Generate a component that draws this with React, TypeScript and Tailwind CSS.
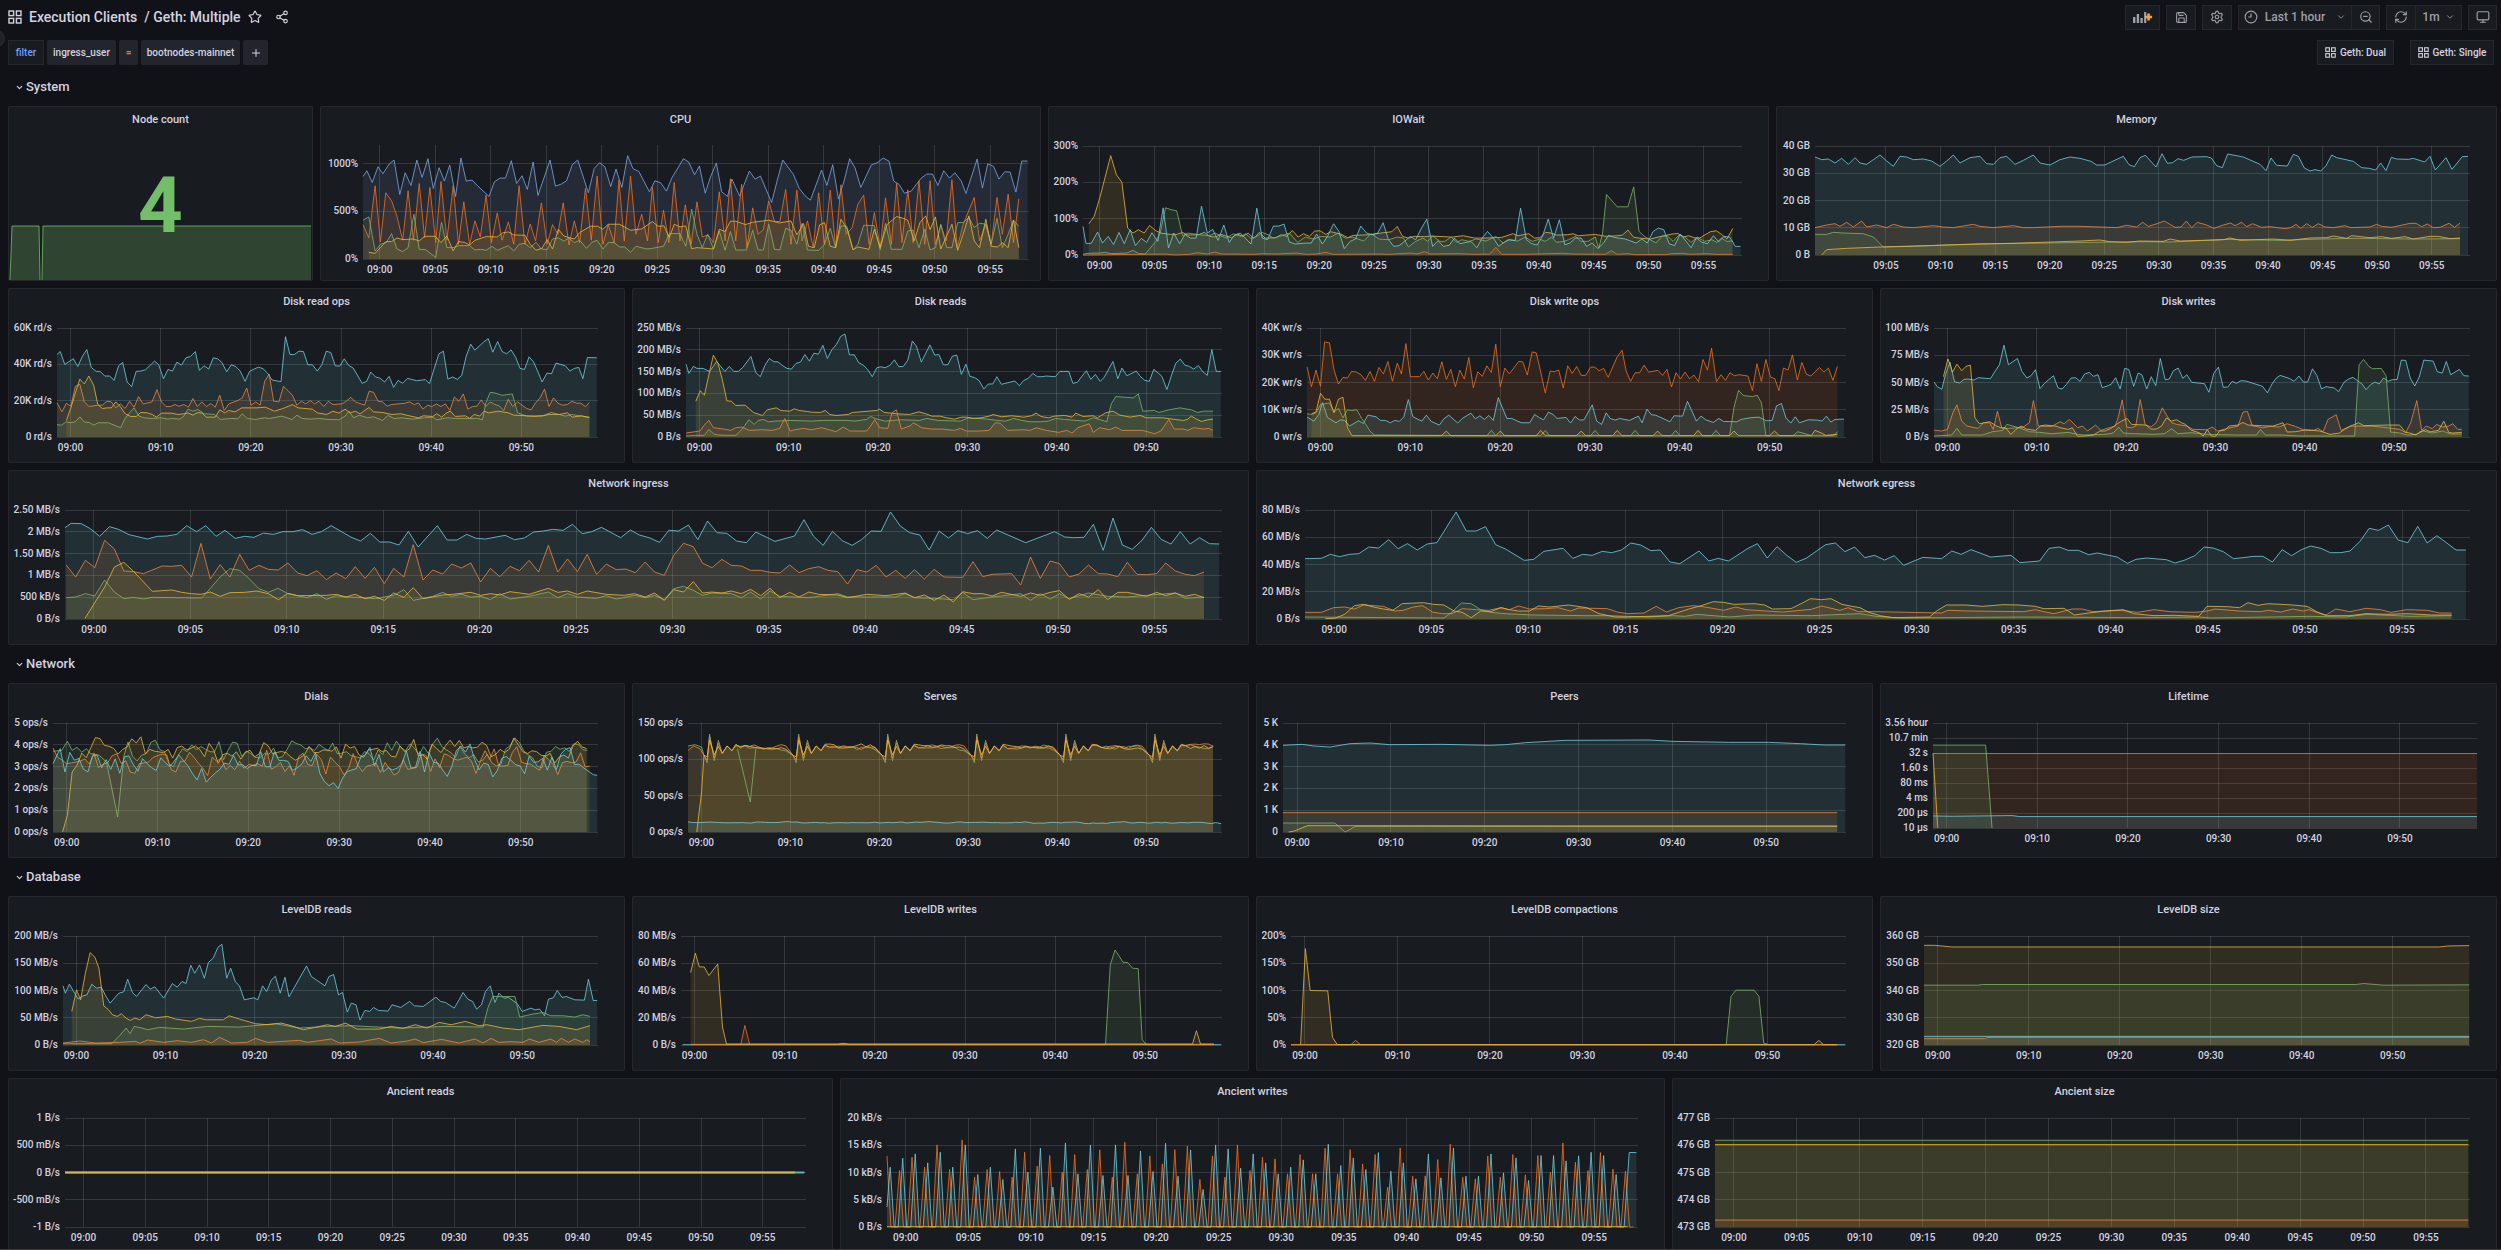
import { ChevronDown, Monitor, Plus, RefreshCw, Save, Settings, Share2, Star, ZoomOut } from 'lucide-react';
import clsx from 'clsx';

const BLUE = '#7ea6ea';
const TEAL = '#6ed0e0';
const ORANGE = '#ef843c';
const DEEP_ORANGE = '#f2701e';
const YELLOW = '#eab839';
const GREEN = '#7eb26d';

type Series = { color: string; points: string; width?: number; lineOnly?: boolean };

type ChartProps = {
  title: string;
  // column span in the 24 column grid
  span: string;
  // space left for the y axis labels and right of the plot
  pad: string;
  // left, top, right and bottom of the plot in the units of the points
  view: [number, number, number, number];
  yLabels: string[];
  series: Series[];
  step?: 5 | 10;
  firstTick?: number;
  // share of the plot above the first label
  headroom?: number;
  filled?: boolean;
  height?: string;
};

// moves every point to the right, for the second half of the long charts
const shift = (dx: number, points: string) =>
  points
    .split(' ')
    .map((p) => {
      const [x, y] = p.split(',').map(Number);
      return `${x + dx},${y}`;
    })
    .join(' ');

// uneven noise around a level
const noise = (from: number, to: number, mid: number, amp: number, seed: number) => {
  let state = seed;
  let last = 0;
  const out: string[] = [];
  for (let x = from; x <= to; x += 5.7) {
    state = (state * 16807) % 2147483647;
    const next = (state / 2147483647 - 0.5) * 2;
    last = last * 0.45 + next * Math.abs(next) * 0.9 + next * 0.3;
    out.push(`${x.toFixed(1)},${(mid + last * amp).toFixed(1)}`);
  }
  return out.join(' ');
};

// one narrow spike per minute
const spikes = (from: number, base: number, peaks: number[]) =>
  peaks
    .map((peak, i) => {
      const x = from + i * 15.7;
      return `${x.toFixed(1)},${peak} ${(x + 5).toFixed(1)},${base} ${(x + 10).toFixed(1)},${base}`;
    })
    .join(' ');

const servesSpikes = (color: string, offset: number, seed: number, lead: string) => {
  const parts = [lead];
  for (let i = 0; i < 6; i++) {
    const x = 889 + i * 111.6;
    parts.push(
      `${x - 6},350 ${x - 2},${372 - offset} ${x + 1},${286 + offset} ${x + 7},${366 - offset} ${x + 12},${305 + offset} ${x + 17},344 ${x + 23},322 ${x + 29},336`,
    );
    parts.push(noise(x + 34, Math.min(x + 100, 1522), 328 - offset / 4, 6, seed + i * 77));
  }
  return { color, points: parts.join(' ') };
};

const charts: Record<string, ChartProps> = {
  cpu: {
    title: 'CPU',
    span: 'col-span-7',
    pad: 'pl-[43px] pr-[12px]',
    view: [131, 133, 1505, 474],
    yLabels: ['1000%', '500%', '0%'],
    headroom: 0.165,
    height: 'h-[114px]',
    series: [
      { color: BLUE, points: '131,227 139,210 150,245 162,198 172,219 185,190 195,178 207,281 218,216 230,254 242,178 253,230 265,174 276,263 288,201 299,241 310,193 322,287 333,172 344,241 356,238 368,256 391,287 402,243 414,232 425,232 437,180 448,248 459,225 470,266 482,184 492,284 517,178 528,256 540,250 551,240 563,191 574,178 596,276 608,203 619,186 630,198 642,257 653,205 665,260 677,165 688,204 700,212 722,273 733,240 745,246 757,271 768,232 792,174 803,184 815,222 825,196 837,277 848,228 860,187 871,273 883,287 892,235 908,286 928,211 940,235 951,226 962,264 974,305 985,242 997,178 1019,221 1031,263 1043,285 1054,298 1077,208 1088,254 1100,192 1112,295 1124,238 1135,174 1146,201 1158,260 1180,192 1192,186 1204,172 1216,181 1226,241 1237,251 1248,277 1262,271 1282,233 1294,220 1306,220 1317,254 1329,210 1341,232 1352,216 1365,240 1375,278 1398,175 1409,262 1420,189 1432,197 1443,235 1455,213 1466,214 1478,274 1490,181 1502,181' },
      { color: DEEP_ORANGE, points: '131,371 143,411 156,255 167,423 178,276 190,300 201,346 213,418 224,270 235,418 247,248 258,410 269,260 281,425 292,242 304,418 317,255 328,430 339,303 351,430 362,360 373,408 385,283 396,425 408,336 418,418 431,363 442,430 453,255 465,430 476,369 487,420 499,306 511,430 522,371 533,400 544,306 556,432 567,360 578,425 590,262 602,418 614,226 626,430 637,371 649,425 659,238 670,420 683,226 694,400 706,340 718,420 728,260 740,425 751,328 762,425 773,245 785,420 796,312 808,430 820,303 831,408 843,402 854,425 866,273 878,420 889,234 900,420 912,250 923,440 935,321 946,400 957,386 968,300 980,362 991,362 1003,266 1014,430 1026,268 1037,420 1048,360 1060,440 1071,276 1083,430 1095,268 1106,440 1117,252 1128,400 1140,380 1152,310 1164,283 1175,430 1186,335 1198,440 1209,291 1221,430 1232,248 1243,425 1255,267 1266,425 1278,240 1290,430 1301,240 1312,430 1323,372 1334,420 1346,237 1357,440 1369,371 1392,290 1403,420 1416,371 1427,430 1439,290 1450,400 1462,280 1473,425 1484,294' },
      { color: GREEN, points: '131,358 143,348 156,450 167,430 179,425 190,398 201,444 213,452 224,440 236,340 247,445 260,446 281,469 293,364 304,440 317,440 328,434 351,434 362,447 374,445 385,448 397,436 408,448 431,434 442,450 453,430 465,427 476,440 488,424 499,444 511,446 522,414 534,411 545,420 556,412 567,425 578,418 592,442 603,424 614,418 626,444 637,425 649,425 660,438 671,438 683,454 694,436 717,444 728,442 751,436 763,398 785,398 797,436 809,325 820,400 831,440 842,400 854,444 866,390 878,448 889,392 900,447 922,447 935,388 946,447 957,447 968,370 980,445 991,447 1003,382 1014,388 1026,430 1037,367 1048,447 1071,448 1083,430 1095,382 1106,440 1117,375 1129,376 1142,447 1152,430 1164,373 1186,374 1198,447 1209,367 1221,445 1243,445 1255,390 1266,388 1278,440 1290,385 1301,447 1312,440 1323,370 1335,440 1346,440 1358,365 1369,365 1381,350 1392,380 1403,367 1416,370 1427,430 1439,352 1450,440 1462,400 1473,358 1484,376' },
      { color: YELLOW, points: '143,454 156,457 178,422 190,422 201,411 213,416 235,414 247,420 258,406 280,406 292,425 304,405 317,450 328,422 340,424 351,432 362,418 385,407 408,408 419,396 431,393 442,402 465,403 476,430 488,448 500,442 511,416 522,444 534,385 545,405 556,410 567,414 578,395 600,376 615,376 626,385 637,370 660,370 683,388 706,384 728,362 740,376 752,375 763,410 773,370 785,378 797,375 809,443 820,440 854,444 866,385 878,392 889,361 900,361 920,371 935,364 968,358 990,366 1014,360 1026,402 1040,368 1050,436 1062,440 1073,372 1083,365 1095,436 1106,440 1117,355 1130,385 1142,446 1152,438 1175,445 1186,385 1198,440 1212,371 1232,347 1245,352 1255,358 1268,420 1280,365 1292,345 1301,386 1312,348 1323,444 1346,370 1358,448 1369,400 1381,345 1392,420 1403,440 1416,355 1427,436 1440,438 1450,425 1462,440 1473,357 1484,440' },
    ],
  },
  ioWait: {
    title: 'IOWait',
    span: 'col-span-7',
    pad: 'pl-[35px] pr-[27px]',
    view: [90, 138, 1447, 466],
    yLabels: ['300%', '200%', '100%', '0%'],
    series: [
      { color: YELLOW, points: '102,372 113,350 125,292 147,167 159,225 170,247 182,385 193,400 204,390 216,400 227,377 239,392 250,400 270,404 283,404 295,398 306,406 328,405 340,398 351,410 362,412 374,404 396,414 408,403 419,410 430,400 442,416 453,398 465,415 487,414 498,405 510,410 521,392 533,412 544,402 556,410 567,394 578,393 590,404 600,396 612,400 623,404 635,414 646,407 680,405 703,400 726,396 737,380 748,410 760,415 771,410 794,411 805,409 850,412 873,408 896,415 918,415 952,413 963,408 975,402 986,408 1008,402 1020,415 1031,414 1042,398 1054,400 1065,406 1088,405 1099,402 1110,408 1145,404 1167,410 1190,408 1201,406 1212,391 1224,413 1236,415 1258,418 1280,410 1303,403 1315,401 1326,412 1337,408 1349,414 1360,415 1371,405 1382,396 1394,393 1405,404 1416,418 1428,386' },
      { color: GREEN, points: '90,464 100,461 124,460 136,458 148,462 180,460 193,452 205,462 218,463 240,425 249,400 260,324 272,330 283,333 295,408 306,400 330,405 350,408 362,400 385,415 400,402 415,410 425,402 436,416 448,410 459,398 471,405 482,415 495,410 515,400 532,428 548,412 565,418 580,410 600,412 615,400 630,415 645,412 668,424 683,402 700,418 720,420 737,412 750,415 760,442 775,425 790,415 800,425 810,408 825,425 835,425 848,412 860,428 870,420 885,425 900,418 920,424 940,410 955,430 965,420 985,424 1000,412 1015,425 1030,418 1042,425 1055,412 1065,428 1080,425 1090,420 1105,410 1115,425 1130,425 1145,412 1152,446 1160,400 1168,284 1190,321 1212,321 1224,261 1235,395 1246,410 1258,420 1270,430 1282,410 1293,408 1305,425 1318,405 1330,412 1342,428 1355,412 1370,425 1385,420 1395,428 1405,415 1415,425 1427,424' },
      { color: TEAL, points: '90,380 96,431 107,431 120,397 130,430 142,410 153,435 164,398 175,432 187,390 198,438 210,416 221,428 232,399 244,425 255,324 266,445 277,400 289,432 300,404 311,415 323,415 334,319 346,400 357,389 368,422 380,376 391,428 402,406 414,400 436,433 448,325 459,415 470,420 482,379 493,379 504,373 515,427 527,433 549,430 560,430 571,403 583,433 594,408 606,372 617,395 628,447 640,425 651,418 662,379 674,400 685,405 697,400 708,369 719,420 730,440 741,438 752,425 764,410 775,420 787,385 798,358 810,440 821,423 832,440 844,437 855,415 866,432 889,425 901,444 912,415 923,395 935,415 946,440 957,428 968,420 980,422 991,325 1003,420 1014,432 1025,436 1036,410 1048,358 1059,415 1071,360 1082,435 1093,430 1104,415 1116,415 1127,440 1138,430 1150,446 1162,430 1172,407 1184,413 1207,418 1229,430 1241,418 1252,430 1264,395 1275,385 1286,390 1297,432 1308,438 1320,403 1332,425 1342,444 1353,415 1365,428 1376,432 1388,408 1399,426 1410,410 1422,412 1433,440 1444,440' },
      { color: DEEP_ORANGE, points: '90,466 260,463 280,466 310,464 325,459 345,463 362,457 375,463 400,463 440,464 460,462 490,463 530,460 550,464 570,463 590,458 605,464 700,463 720,464 765,460 778,463 793,456 805,463 860,462 900,464 928,463 940,443 952,464 1000,464 1075,461 1100,463 1165,464 1178,453 1190,464 1212,462 1225,465 1290,465 1303,462 1325,461 1340,464 1375,462 1395,464 1428,464' },
    ],
  },
  memory: {
    title: 'Memory',
    span: 'col-span-7',
    pad: 'pl-[39px] pr-[27px]',
    view: [-795, 439, 1170, 766],
    yLabels: ['40 GB', '30 GB', '20 GB', '10 GB', '0 B'],
    firstTick: 5,
    series: [
      { color: TEAL, points: '-795,472 -775,480 -755,478 -735,490 -715,476 -695,494 -675,474 -660,490 -640,494 -620,480 -600,466 -580,484 -560,500 -540,470 -520,472 -500,480 -470,478 -445,484 -420,500 -400,484 -380,466 -360,490 -330,474 -300,470 -280,492 -260,494 -240,474 -220,470 -195,494 -170,482 -140,466 -120,490 -90,496 -60,480 -30,472 0,476 33,485 50,496 74,496 130,470 147,495 163,501 180,474 196,467 228,502 246,462 262,491 278,489 294,477 311,482 336,472 380,471 394,475 410,498 427,504 443,463 490,472 540,494 558,513 573,475 590,497 622,499 640,464 655,470 673,505 690,514 705,510 722,514 738,498 755,466 770,474 820,485 845,504 868,506 887,511 902,490 918,513 934,473 950,478 985,479 1000,476 1034,487 1050,470 1066,511 1098,474 1116,509 1147,471 1164,470' },
      { color: ORANGE, points: '-795,684 -760,676 -735,672 -720,680 -700,668 -680,682 -655,664 -640,682 -610,676 -580,684 -560,674 -530,682 -500,684 -440,678 -410,682 -380,684 -320,674 -300,680 -260,684 -200,678 -170,684 -140,684 -60,680 0,680 60,682 110,684 140,677 170,682 188,668 205,680 225,674 253,664 285,683 303,682 319,664 335,684 352,668 380,676 402,686 430,676 452,670 465,678 485,668 500,681 518,672 545,683 570,681 615,687 632,684 648,674 662,686 680,672 697,683 715,672 735,682 760,684 795,678 812,684 870,682 890,674 905,680 935,683 990,671 1008,671 1025,681 1042,673 1060,684 1080,683 1107,671 1124,683 1140,670' },
      { color: GREEN, points: '-795,704 -760,704 -740,698 -710,700 -650,702 -620,712 -590,742 -500,740 -300,732 -100,730 100,727 200,726 270,727 450,719 600,722 720,718 830,716 1000,718 1140,717' },
      { color: YELLOW, points: '-775,766 -760,750 -700,746 -600,742 -400,736 -200,731 0,724 60,721 90,726 140,728 180,724 250,725 270,718 300,724 430,720 450,715 480,722 580,718 630,722 690,715 740,714 760,709 800,716 815,708 870,714 905,711 935,716 975,711 1000,718 1050,710 1075,710 1110,717 1140,715' },
    ],
  },
  diskReadOps: {
    title: 'Disk read ops',
    span: 'col-span-6',
    pad: 'pl-[49px] pr-[27px]',
    view: [139, 129, 1465, 458],
    yLabels: ['60K rd/s', '40K rd/s', '20K rd/s', '0 rd/s'],
    step: 10,
    series: [
      { color: TEAL, points: '139,209 147,200 158,239 179,222 190,245 201,215 212,194 223,248 235,260 245,260 256,274 268,274 279,287 290,243 300,233 311,292 322,306 333,260 344,259 356,255 378,229 388,239 400,282 411,254 422,259 433,232 444,241 455,219 466,215 478,200 488,257 499,243 511,253 522,219 533,222 543,233 555,261 566,240 577,245 588,259 600,290 611,260 622,253 633,247 644,252 655,265 666,286 688,291 699,155 710,209 721,209 732,199 743,200 754,240 765,240 777,259 788,240 799,199 810,203 821,243 832,244 843,222 854,242 865,250 887,296 898,290 908,262 920,277 930,280 942,292 953,275 964,308 975,287 986,296 998,281 1020,288 1042,285 1052,297 1075,207 1086,199 1097,283 1109,277 1120,284 1131,272 1142,214 1153,178 1163,196 1185,171 1196,161 1207,202 1219,170 1230,200 1241,207 1252,195 1263,217 1274,251 1285,254 1296,216 1307,231 1318,262 1328,292 1340,265 1351,267 1362,235 1385,243 1396,259 1407,251 1418,248 1428,282 1439,218 1462,219' },
      { color: ORANGE, points: '139,355 151,382 162,356 173,365 184,305 195,299 206,352 217,366 239,362 250,362 261,350 272,352 283,370 294,358 306,372 317,350 328,368 339,336 350,358 372,352 384,315 395,352 406,366 417,366 428,360 438,365 450,360 461,368 472,342 483,366 494,352 505,366 516,357 527,368 538,332 549,378 560,358 582,348 593,340 604,310 615,362 626,352 637,362 648,290 659,268 670,350 683,352 694,305 705,318 716,332 727,362 738,350 749,358 760,348 770,358 781,350 793,366 804,350 815,360 837,358 848,350 859,338 870,352 893,362 904,320 915,323 926,350 937,352 948,365 959,360 992,356 1003,352 1015,360 1025,355 1036,374 1047,362 1058,366 1069,358 1080,366 1091,358 1102,378 1113,337 1124,350 1135,328 1146,374 1157,366 1168,365 1179,346 1190,366 1201,352 1212,360 1223,364 1234,378 1245,344 1256,366 1268,352 1279,362 1290,372 1301,376 1312,355 1323,340 1334,313 1345,366 1356,340 1367,356 1378,362 1390,360 1401,350 1412,356 1423,356 1434,366 1444,354' },
      { color: GREEN, points: '139,421 150,422 162,412 173,415 184,412 195,397 206,413 218,414 229,422 240,415 265,415 283,424 295,430 306,402 317,385 328,370 340,395 352,400 372,402 395,400 410,404 420,402 440,404 450,395 460,374 472,380 485,375 500,388 525,390 540,405 565,402 582,403 593,388 605,402 625,405 648,400 660,402 690,395 715,405 727,392 740,402 760,404 780,402 805,405 830,406 845,395 855,380 866,400 880,392 900,400 915,397 937,408 950,393 965,402 985,400 1010,404 1040,400 1060,398 1070,406 1095,400 1115,402 1145,402 1170,402 1182,406 1190,355 1201,323 1215,326 1230,332 1255,328 1268,385 1290,395 1310,394 1330,394 1350,384 1370,390 1385,395 1400,390 1425,395 1444,398' },
      { color: YELLOW, points: '162,408 173,370 184,325 195,283 206,298 217,274 229,302 239,360 250,372 262,370 272,370 283,352 295,368 306,388 320,396 333,396 344,384 360,385 372,390 383,398 395,386 420,386 435,390 450,388 460,385 472,392 484,384 495,386 505,398 527,398 538,376 550,385 560,378 575,382 592,370 615,370 628,370 650,368 672,380 693,372 716,360 730,370 765,374 777,385 800,390 815,380 830,386 845,374 858,385 870,380 882,388 893,378 904,369 915,382 937,384 960,390 982,388 1002,394 1025,400 1037,394 1060,396 1070,388 1082,398 1093,386 1103,380 1115,396 1140,394 1150,402 1162,390 1175,395 1186,380 1197,385 1220,380 1245,385 1258,392 1290,394 1310,396 1330,394 1345,390 1370,390 1390,385 1402,398 1425,394 1444,400' },
    ],
  },
  diskReads: {
    title: 'Disk reads',
    span: 'col-span-6',
    pad: 'pl-[54px] pr-[27px]',
    view: [163, 129, 1475, 458],
    yLabels: ['250 MB/s', '200 MB/s', '150 MB/s', '100 MB/s', '50 MB/s', '0 B/s'],
    step: 10,
    series: [
      { color: TEAL, points: '163,238 170,266 181,245 190,251 205,251 220,260 230,245 238,230 258,260 269,245 280,260 291,260 302,248 322,215 334,264 345,276 356,242 367,221 378,231 388,231 400,243 410,251 421,253 432,236 443,232 454,209 465,229 476,205 487,208 498,181 509,221 520,195 531,179 542,154 552,147 563,210 575,210 586,234 597,241 608,255 619,276 630,249 640,246 650,249 662,242 673,225 684,246 695,245 706,226 717,168 727,184 739,232 750,205 760,180 772,211 782,209 793,240 804,240 815,214 826,211 837,269 848,238 858,275 870,279 880,287 892,313 903,298 914,298 924,276 935,299 968,289 979,303 990,287 1001,281 1012,266 1023,276 1034,276 1045,274 1067,276 1078,260 1100,260 1110,296 1121,293 1132,275 1143,258 1154,284 1165,269 1177,290 1187,277 1208,230 1220,282 1230,250 1242,273 1265,259 1275,275 1286,287 1297,290 1308,254 1319,265 1328,275 1340,315 1352,270 1362,235 1373,223 1384,241 1395,245 1406,253 1417,242 1428,261 1439,272 1450,194 1461,260 1472,260' },
      { color: GREEN, points: '163,455 175,454 187,453 208,453 219,435 230,448 241,452 263,453 285,453 300,435 317,406 330,420 340,408 352,405 365,412 380,410 420,408 470,410 500,408 560,408 575,410 605,405 615,396 628,403 650,410 690,406 735,408 752,402 780,408 835,410 855,400 900,404 925,408 945,410 965,402 985,408 1005,412 1030,412 1050,410 1068,402 1090,405 1140,410 1160,400 1175,405 1193,412 1204,358 1215,336 1258,340 1270,328 1281,380 1310,378 1320,384 1345,376 1372,370 1400,376 1415,384 1430,380 1453,380' },
      { color: YELLOW, points: '187,350 198,318 208,332 220,265 230,211 241,235 252,285 263,349 274,350 285,363 308,362 318,373 328,384 350,393 362,376 384,370 395,378 417,380 428,373 440,378 460,381 470,383 492,384 504,378 515,390 530,393 560,390 570,384 590,382 630,378 637,374 648,384 680,388 710,390 733,382 750,388 765,395 785,395 800,400 820,404 838,398 850,398 865,402 885,400 905,395 915,390 935,397 960,394 990,398 1008,394 1020,386 1032,396 1050,400 1065,395 1090,393 1108,398 1117,386 1135,396 1160,394 1170,400 1190,385 1208,380 1225,392 1250,398 1275,393 1290,400 1330,400 1360,405 1380,408 1390,405 1400,395 1412,404 1425,411 1440,406 1453,404' },
      { color: ORANGE, points: '163,446 185,442 197,440 208,422 219,408 230,430 255,434 272,438 285,430 300,428 318,438 350,436 375,438 392,432 405,402 418,440 430,436 450,432 470,436 495,430 510,435 530,442 548,428 565,440 605,440 615,425 625,405 637,430 657,432 667,385 678,376 690,434 712,424 720,415 740,430 765,434 790,434 820,438 835,432 850,440 880,440 905,438 920,415 932,416 950,438 990,436 1005,438 1020,430 1045,438 1075,444 1095,438 1108,446 1122,430 1150,418 1160,444 1175,430 1200,436 1215,428 1230,438 1280,438 1310,448 1325,440 1345,405 1358,434 1380,434 1392,438 1405,430 1430,434 1443,432 1453,438' },
    ],
  },
  diskWriteOps: {
    title: 'Disk write ops',
    span: 'col-span-6',
    pad: 'pl-[51px] pr-[27px]',
    view: [166, 129, 1485, 458],
    yLabels: ['40K wr/s', '30K wr/s', '20K wr/s', '10K wr/s', '0 wr/s'],
    step: 10,
    series: [
      { color: DEEP_ORANGE, points: '166,246 177,306 188,256 199,305 209,171 221,174 232,255 243,298 254,278 265,280 275,260 287,262 298,270 309,287 320,260 331,290 342,248 353,268 364,230 375,290 387,235 397,268 408,176 419,276 441,276 452,260 463,286 474,265 485,282 496,231 507,284 518,254 529,306 540,256 551,283 562,218 573,309 584,261 595,275 606,243 617,263 628,178 639,306 650,250 661,267 672,250 684,230 694,231 705,271 717,201 727,204 738,262 749,325 761,259 771,261 782,256 793,310 804,243 815,266 826,245 837,272 848,272 860,247 870,247 881,258 892,251 903,278 925,216 937,196 947,259 958,290 969,264 980,264 991,241 1002,262 1025,257 1036,272 1047,254 1058,307 1069,264 1080,283 1091,262 1102,282 1113,271 1124,291 1135,224 1146,256 1156,190 1168,291 1179,270 1190,287 1201,264 1212,273 1223,270 1245,274 1256,318 1267,237 1278,290 1289,224 1300,277 1311,282 1321,318 1332,250 1343,256 1354,210 1366,286 1377,233 1388,268 1399,274 1420,248 1431,262 1442,250 1453,287 1464,245' },
      { color: TEAL, points: '166,398 183,410 195,390 204,354 216,399 237,415 248,406 258,408 270,425 292,409 304,417 315,392 335,397 346,408 358,408 370,415 381,408 392,411 403,397 414,345 425,397 447,410 458,392 470,411 490,422 501,403 513,392 535,416 546,402 567,386 578,403 589,394 600,405 611,393 622,408 634,339 655,402 667,402 690,415 711,415 723,390 735,400 745,406 757,383 768,390 778,402 800,399 811,416 822,396 833,407 844,406 864,361 875,410 887,420 898,385 908,402 920,407 931,402 955,408 977,395 986,415 998,374 1009,391 1019,392 1042,405 1054,412 1064,394 1085,395 1097,350 1119,410 1130,395 1142,406 1160,414 1174,402 1185,411 1218,412 1228,405 1250,400 1272,398 1290,409 1304,408 1315,364 1327,357 1338,400 1350,416 1361,397 1371,415 1393,406 1415,407 1426,410 1437,395 1448,413 1458,405 1480,404' },
      { color: GREEN, points: '166,388 177,390 188,385 199,360 221,355 232,382 243,372 254,400 265,376 275,378 288,376 300,402 310,420 320,440 331,452 606,454 617,438 628,454 738,454 749,438 760,454 860,454 871,438 882,454 958,454 969,438 980,454 1057,454 1068,438 1079,454 1156,454 1167,438 1178,454 1200,454 1211,368 1222,317 1234,333 1256,336 1268,332 1278,355 1289,454 1355,454 1367,442 1385,448 1400,454 1455,454 1464,442' },
      { color: YELLOW, points: '177,388 188,382 199,326 210,344 221,344 232,385 243,344 254,338 265,430 276,454 495,454 507,440 518,454 628,454 639,440 650,454 727,454 738,438 749,454 825,454 837,440 848,454 914,454 925,438 937,454 1013,454 1024,440 1035,454 1112,454 1123,438 1134,454 1200,454 1211,440 1222,454 1298,454 1310,440 1322,454 1400,454 1409,438 1425,446 1435,453 1464,450' },
    ],
  },
  diskWrites: {
    title: 'Disk writes',
    span: 'col-span-6',
    pad: 'pl-[54px] pr-[27px]',
    view: [182, 129, 1492, 458],
    yLabels: ['100 MB/s', '75 MB/s', '50 MB/s', '25 MB/s', '0 B/s'],
    step: 10,
    series: [
      { color: TEAL, points: '182,292 190,306 201,314 210,270 221,232 232,291 245,295 255,284 265,283 280,286 290,279 320,282 332,258 342,240 353,181 364,240 386,221 397,260 409,280 419,273 430,255 441,312 452,296 474,273 485,310 495,313 506,299 517,280 528,279 539,290 550,268 561,263 572,275 583,270 593,309 605,304 615,299 626,279 637,313 648,251 658,254 670,305 681,265 690,270 702,313 713,276 724,303 735,221 747,285 757,283 767,258 779,250 790,281 800,270 812,293 843,297 854,323 866,265 877,247 889,308 900,307 911,290 921,296 932,288 944,289 985,305 997,325 1008,298 1018,281 1028,272 1050,281 1062,290 1074,274 1085,292 1095,292 1107,252 1118,273 1129,313 1140,306 1160,310 1171,321 1184,293 1195,283 1206,278 1228,298 1238,315 1249,300 1260,292 1270,298 1281,280 1292,290 1302,285 1314,284 1324,226 1335,227 1346,280 1357,304 1368,277 1379,226 1402,229 1412,261 1424,265 1434,230 1445,270 1466,254 1477,273 1489,274' },
      { color: ORANGE, points: '182,437 200,440 215,435 228,385 238,361 250,410 262,425 290,432 303,415 318,415 327,435 337,380 348,432 365,432 385,430 400,428 415,415 425,348 437,425 470,426 490,412 500,418 513,405 533,430 545,425 557,440 577,422 590,438 610,430 625,425 632,400 642,346 653,428 665,430 675,425 686,345 698,420 712,428 725,415 740,370 752,395 763,415 775,420 800,425 815,435 850,436 862,428 875,440 900,432 925,425 937,383 948,381 960,424 985,430 1005,426 1025,428 1045,418 1065,426 1085,436 1110,438 1120,432 1133,442 1145,405 1165,391 1177,438 1200,425 1250,425 1290,430 1320,435 1335,445 1347,415 1362,348 1374,438 1385,425 1400,433 1410,420 1425,428 1440,425 1450,418 1462,435 1472,435' },
      { color: GREEN, points: '182,455 225,452 238,432 250,452 300,452 325,442 350,438 360,420 375,425 390,430 415,442 440,444 470,448 510,444 533,450 548,452 600,450 620,446 633,428 645,446 670,448 720,450 745,448 763,433 778,448 810,445 850,450 920,452 970,452 980,435 992,452 1030,452 1060,454 1075,455 1120,455 1210,455 1221,240 1232,224 1245,245 1254,252 1275,251 1287,273 1298,443 1320,446 1340,452 1360,450 1378,440 1400,446 1425,440 1445,449 1472,449' },
      { color: YELLOW, points: '205,276 216,222 227,262 238,238 250,258 260,245 271,241 282,400 293,418 305,415 318,412 335,425 345,430 357,430 370,450 382,435 395,425 408,434 430,438 443,424 455,422 480,425 490,430 510,435 520,430 533,456 548,455 572,452 587,440 600,440 615,432 628,420 640,410 654,402 665,420 700,422 712,434 725,434 738,425 750,400 762,410 775,406 787,415 797,420 810,437 830,445 840,455 850,436 860,455 870,456 880,440 893,437 903,425 925,422 937,414 950,422 985,424 1010,425 1023,420 1035,415 1045,443 1065,442 1088,437 1110,438 1125,440 1150,450 1173,446 1185,435 1200,425 1220,415 1233,424 1250,423 1290,422 1320,422 1335,444 1345,446 1360,452 1370,442 1383,436 1395,442 1415,438 1428,410 1440,444 1450,446 1472,444' },
    ],
  },
  ingress: {
    title: 'Network ingress',
    span: 'col-span-12',
    pad: 'pl-[57px] pr-[27px]',
    view: [160, 679, 2994, 1006],
    yLabels: ['2.50 MB/s', '2 MB/s', '1.50 MB/s', '1 MB/s', '500 kB/s', '0 B/s'],
    series: [
      { color: TEAL, points: '160,732 175,719 200,720 222,735 245,758 269,729 291,737 317,753 362,766 386,758 410,757 434,752 458,726 482,744 505,726 530,758 552,740 577,764 600,758 623,761 646,748 670,752 694,744 718,744 742,738 765,752 788,744 812,726 860,760 884,772 908,749 931,775 955,775 978,784 1001,743 1025,790 1072,726 1096,769 1120,769 1144,752 1167,764 1190,766 1238,755 1261,768 1285,763 1308,745 1332,742 1355,737 1380,740 1403,722 1427,750 1450,744 1474,731 1521,762 1545,739 ' + shift(1519, '48,754 74,763 97,776 120,740 144,742 168,724 191,768 215,712 238,747 262,749 286,772 310,777 333,745 380,773 428,757 451,708 474,757 498,785 521,743 545,771 569,785 592,768 616,742 640,743 663,685 687,727 710,747 735,754 758,799 782,742 805,763 828,741 852,750 876,741 900,764 923,739 994,777 1065,744 1090,760 1112,762 1137,761 1160,722 1184,800 1208,703 1231,784 1255,797 1279,770 1302,731 1326,767 1350,781 1373,744 1397,781 1420,762 1444,780 1468,781') },
      { color: ORANGE, points: '163,844 186,880 210,830 233,852 257,770 281,796 304,862 328,864 352,870 398,847 421,848 446,845 470,880 493,779 516,886 540,843 564,880 588,812 611,860 635,845 658,857 682,859 706,838 730,868 753,876 777,861 800,888 824,868 848,885 871,849 895,884 918,851 942,900 965,854 990,880 1013,783 1037,889 1061,859 1085,871 1107,841 1131,853 1154,838 1178,895 1202,854 1225,879 1250,848 1273,861 1297,830 1320,865 1344,785 1367,865 1391,826 1415,864 1439,812 1462,872 1486,841 1510,858 1533,856 ' + shift(1519, '38,867 62,835 85,865 109,875 132,815 156,779 180,789 203,839 226,852 250,827 273,845 298,847 320,860 345,860 368,866 392,868 416,844 439,867 463,855 487,849 510,860 534,864 558,901 581,858 605,865 628,845 652,880 676,860 699,884 722,858 746,886 770,857 794,880 840,881 865,834 889,879 912,872 960,870 982,904 1006,820 1030,884 1054,832 1077,840 1101,880 1125,871 1148,844 1172,870 1195,871 1220,879 1243,836 1267,872 1290,873 1315,870 1337,838 1361,862 1385,872 1408,876 1431,865') },
      { color: GREEN, points: '163,942 186,940 210,930 233,937 257,889 281,925 304,945 328,941 352,946 375,941 495,943 516,914 540,880 564,855 588,860 611,885 635,915 658,926 682,914 706,930 753,942 777,930 800,947 824,936 848,940 890,942 920,945 965,935 990,918 1013,950 1061,938 1085,926 1107,938 1131,932 1154,940 1178,938 1202,948 1225,930 1250,946 1297,938 1344,925 1367,942 1391,930 1415,940 1462,944 1486,936 1510,946 ' + shift(1519, '38,935 62,942 85,935 109,948 132,915 156,908 180,920 203,935 226,928 273,930 298,942 320,925 345,946 368,922 392,938 463,942 534,930 558,940 605,940 675,940 699,930 722,942 770,944 817,948 840,926 865,948 912,940 982,930 1006,950 1030,930 1054,946 1077,930 1101,945 1148,928 1195,938 1243,940 1290,935 1361,928 1385,944 1431,940') },
      { color: YELLOW, points: '209,1004 257,910 281,850 304,836 327,862 374,923 398,921 422,919 446,926 470,930 493,932 516,925 540,938 564,927 600,926 630,922 658,930 683,948 706,929 730,936 800,935 825,932 848,940 871,932 895,945 918,938 942,950 965,928 990,941 1013,912 1037,945 1060,940 1085,934 1108,932 1154,926 1178,935 1202,930 1225,934 1250,924 1297,932 1344,914 1367,926 1391,922 1415,932 1439,922 1486,932 1530,935 ' + shift(1519, '36,930 62,940 85,928 109,950 132,918 156,925 180,894 203,928 226,925 250,928 273,922 298,930 320,917 345,936 368,914 392,942 416,926 439,940 463,925 487,932 534,934 558,942 605,932 652,936 699,928 722,942 746,934 770,950 794,934 817,955 840,924 865,930 889,930 912,937 935,926 982,938 1006,928 1030,935 1054,926 1077,921 1101,947 1125,930 1148,940 1172,918 1195,948 1220,926 1243,926 1290,938 1315,926 1337,936 1361,928 1385,938 1408,932 1431,942') },
    ],
  },
  egress: {
    title: 'Network egress',
    span: 'col-span-12',
    pad: 'pl-[49px] pr-[27px]',
    view: [160, 679, 3013, 1006],
    yLabels: ['80 MB/s', '60 MB/s', '40 MB/s', '20 MB/s', '0 B/s'],
    series: [
      { color: TEAL, points: '160,825 200,824 222,812 245,819 269,812 292,810 316,790 340,793 365,768 388,795 411,780 435,799 459,781 483,777 530,685 555,742 579,742 602,729 627,783 651,796 697,830 720,827 745,803 792,794 816,824 840,812 863,815 888,803 911,807 935,799 958,778 982,784 1007,801 1030,799 1054,835 1078,840 1125,802 1149,832 1172,824 1197,832 1245,794 1268,780 1292,823 1316,789 1340,815 1363,836 1387,824 1435,783 1459,778 1482,804 1506,790 ' + shift(1519, '12,822 36,815 60,829 84,816 107,845 154,821 200,825 225,802 248,812 272,798 320,820 370,815 392,837 440,832 463,794 488,790 510,800 535,800 560,813 582,808 630,820 655,839 676,827 702,823 750,828 772,838 796,829 820,816 843,790 865,793 890,804 915,825 938,822 963,818 987,818 1010,835 1034,798 1057,816 1081,798 1104,787 1129,794 1152,807 1178,807 1200,802 1224,774 1247,734 1270,740 1294,724 1318,769 1342,777 1366,728 1389,778 1413,756 1460,799 1484,799') },
      { color: ORANGE, points: '160,986 200,986 230,972 257,970 281,976 304,964 352,968 380,982 400,980 425,970 448,966 472,985 495,990 520,990 545,975 580,978 610,980 640,972 660,978 683,967 710,976 750,975 780,972 810,982 830,973 900,975 925,985 950,990 990,988 1020,968 1045,985 1075,972 1110,966 1140,970 1185,980 1215,970 1240,978 1290,982 1330,985 1400,977 1425,967 1470,980 1490,972 1515,984 ' + shift(1519, '40,984 200,988 215,980 270,982 400,984 430,978 450,984 475,990 520,976 545,976 570,984 640,980 680,986 720,978 760,984 820,986 850,982 870,976 930,982 980,984 1000,980 1030,985 1060,976 1085,982 1100,978 1140,995 1165,976 1200,984 1240,974 1275,978 1300,986 1340,978 1390,980 1420,988 1449,988') },
      { color: GREEN, points: '160,1000 500,1003 520,985 543,958 567,960 590,978 615,986 650,990 720,994 850,996 900,996 1000,1000 1060,996 1090,998 1120,992 1200,1000 1260,994 1400,996 ' + shift(1519, '0,990 40,998 100,1003 400,1000 700,1002 830,1000 860,1003 1100,998 1190,1000 1240,992 1350,998 1449,996') },
      { color: YELLOW, points: '210,1005 233,1004 257,992 281,966 304,962 328,970 352,976 375,980 398,960 450,957 475,962 500,964 525,982 545,986 567,1002 590,982 615,984 640,972 660,978 683,982 710,982 732,967 760,970 805,964 850,972 880,990 920,1000 950,1000 1000,998 1050,996 1075,986 1100,976 1130,966 1160,954 1185,956 1210,962 1260,960 1285,964 1305,976 1350,975 1375,960 1398,945 1425,948 1448,945 1475,962 1500,968 ' + shift(1519, '0,972 20,985 50,996 80,1002 170,1000 190,980 212,964 260,964 300,968 350,963 390,964 430,968 450,975 500,974 525,994 560,988 600,982 645,978 670,990 720,996 770,995 830,998 850,968 900,969 930,972 950,957 975,965 1000,960 1060,964 1095,968 1120,985 1145,996 1200,996 1240,990 1290,992 1340,990 1400,994 1449,994') },
    ],
  },
  dials: {
    title: 'Dials',
    span: 'col-span-6',
    pad: 'pl-[45px] pr-[27px]',
    view: [66, 253, 749, 580],
    yLabels: ['5 ops/s', '4 ops/s', '3 ops/s', '2 ops/s', '1 ops/s', '0 ops/s'],
    step: 10,
    series: [
      { color: GREEN, points: '66,338 77,335 84,308 90,335 96,326 102,340 108,330 113,345 124,350 133,370 147,535 155,350 ' + noise(160, 739, 342, 30, 4211) },
      { color: ORANGE, points: noise(66, 739, 368, 34, 902) },
      { color: YELLOW, points: '78,580 84,530 90,400 96,380 ' + noise(102, 739, 340, 32, 77231) },
      { color: TEAL, points: '66,375 75,330 81,400 ' + noise(87, 736, 382, 40, 5531) + ' 743,408 748,410' },
    ],
  },
  serves: {
    title: 'Serves',
    span: 'col-span-6',
    pad: 'pl-[56px] pr-[27px]',
    view: [863, 253, 1532, 580],
    yLabels: ['150 ops/s', '100 ops/s', '50 ops/s', '0 ops/s'],
    step: 10,
    series: [
      servesSpikes(GREEN, 0, 331, '863,322 872,318 880,325'),
      servesSpikes(ORANGE, 8, 871, '863,335 870,322 878,330'),
      servesSpikes(YELLOW, 18, 1931, '874,580 880,460'),
      { color: GREEN, points: '925,330 941,490 948,330', lineOnly: true },
      { color: TEAL, points: noise(863, 1528, 552, 2, 51) + ' 1531,555' },
    ],
  },
  peers: {
    title: 'Peers',
    span: 'col-span-6',
    pad: 'pl-[27px] pr-[27px]',
    view: [41, 253, 747, 580],
    yLabels: ['5 K', '4 K', '3 K', '2 K', '1 K', '0'],
    step: 10,
    series: [
      { color: TEAL, points: '41,320 65,317 80,322 100,325 125,315 150,313 175,318 240,317 300,320 320,318 345,312 395,305 500,304 530,308 600,311 650,311 690,315 720,319 746,319' },
      { color: ORANGE, points: '41,522 736,522' },
      { color: GREEN, points: '41,553 106,553 119,580 132,563 736,563' },
      { color: YELLOW, points: '48,580 54,578 72,561 430,562 736,562' },
    ],
  },
  lifetime: {
    title: 'Lifetime',
    span: 'col-span-6',
    pad: 'pl-[53px] pr-[20px]',
    view: [856, 253, 1538, 566],
    yLabels: ['3.56 hour', '10.7 min', '32 s', '1.60 s', '80 ms', '4 ms', '200 µs', '10 µs'],
    step: 10,
    height: 'h-[105px]',
    series: [
      { color: DEEP_ORANGE, points: '856,344 1538,344' },
      { color: GREEN, points: '856,319 922,319 930,566' },
      { color: YELLOW, points: '856,343 862,566' },
      { color: TEAL, points: '856,530 880,531 955,529 965,532 1538,532' },
    ],
  },
  levelReads: {
    title: 'LevelDB reads',
    span: 'col-span-6',
    pad: 'pl-[55px] pr-[27px]',
    view: [79, 888, 749, 1216],
    yLabels: ['200 MB/s', '150 MB/s', '100 MB/s', '50 MB/s', '0 B/s'],
    step: 10,
    series: [
      { color: TEAL, points: '79,1038 82,1060 87,1033 98,1078 104,1068 109,1065 115,1033 121,1045 127,1042 132,1066 138,1090 149,1060 155,1056 160,1018 166,1058 171,1070 183,1034 188,1048 194,1041 205,1075 216,1031 222,1042 228,1025 233,1031 239,976 244,1000 250,975 256,1015 261,968 267,955 273,922 278,913 284,1015 289,985 295,1026 300,1038 306,1080 318,1074 323,1080 329,1038 334,1055 340,1020 345,1009 351,1060 357,1012 362,1071 384,978 390,1010 407,1038 412,1010 418,1004 424,1065 429,1058 435,1117 440,1090 446,1095 451,1141 457,1112 463,1115 468,1103 474,1112 486,1114 491,1095 502,1103 513,1085 519,1098 530,1100 546,1072 552,1085 558,1088 569,1105 575,1080 580,1058 586,1078 592,1085 597,1108 603,1095 608,1055 614,1038 620,1088 625,1060 631,1075 637,1073 648,1092 654,1115 665,1105 670,1110 676,1108 682,1128 687,1078 693,1074 698,1052 704,1073 709,1070 720,1080 732,1081 737,1018 743,1082 748,1082' },
      { color: GREEN, points: '79,1212 140,1212 150,1188 158,1165 163,1182 168,1160 178,1165 185,1170 200,1163 230,1168 260,1160 300,1162 345,1152 375,1165 410,1160 440,1158 500,1165 560,1160 605,1162 611,1105 617,1070 645,1070 651,1132 665,1124 680,1118 690,1128 705,1128 720,1132 730,1125 739,1130' },
      { color: YELLOW, points: '90,1115 96,1050 101,1080 107,1000 113,938 119,952 124,985 130,1098 136,1110 141,1125 147,1130 152,1122 158,1135 163,1142 169,1135 175,1140 183,1125 195,1134 210,1130 220,1138 232,1142 240,1145 250,1136 258,1140 280,1140 287,1128 300,1138 320,1152 335,1155 352,1150 365,1158 380,1170 395,1163 410,1155 420,1160 433,1150 447,1168 475,1168 490,1160 505,1166 520,1155 535,1165 550,1148 565,1155 583,1145 600,1158 610,1155 630,1165 650,1170 680,1157 700,1160 722,1170 739,1158' },
      { color: ORANGE, points: '79,1210 100,1204 120,1210 150,1208 170,1205 175,1211 185,1201 205,1208 222,1203 240,1208 255,1200 265,1210 275,1193 290,1210 310,1208 320,1196 335,1208 375,1202 385,1208 400,1203 415,1198 425,1210 450,1207 475,1196 490,1210 510,1204 520,1198 530,1209 553,1199 575,1210 595,1198 605,1210 615,1196 625,1208 640,1206 655,1208 663,1198 675,1208 690,1198 697,1208 703,1196 712,1208 720,1198 730,1208 735,1200 739,1206' },
    ],
  },
  levelWrites: {
    title: 'LevelDB writes',
    span: 'col-span-6',
    pad: 'pl-[49px] pr-[27px]',
    view: [854, 888, 1532, 1216],
    yLabels: ['80 MB/s', '60 MB/s', '40 MB/s', '20 MB/s', '0 B/s'],
    step: 10,
    series: [
      { color: TEAL, points: '856,1215 1531,1215' },
      { color: GREEN, points: '866,1215 1386,1215 1392,975 1398,930 1403,948 1408,967 1414,968 1420,985 1427,986 1432,1200 1437,1215 1522,1215' },
      { color: DEEP_ORANGE, points: '866,1214 929,1214 934,1157 940,1214 1522,1214' },
      { color: YELLOW, points: '866,998 872,940 877,981 883,981 889,1007 900,972 906,1162 911,1213 1050,1213 1057,1211 1065,1213 1495,1213 1500,1173 1505,1213 1522,1213' },
    ],
  },
  levelCompactions: {
    title: 'LevelDB compactions',
    span: 'col-span-6',
    pad: 'pl-[35px] pr-[27px]',
    view: [52, 888, 747, 1216],
    yLabels: ['200%', '150%', '100%', '50%', '0%'],
    step: 10,
    series: [
      { color: TEAL, points: '52,1215 746,1215' },
      { color: GREEN, points: '52,1215 597,1215 603,1070 609,1051 632,1051 638,1070 644,1210 650,1215 736,1215' },
      { color: DEEP_ORANGE, points: '52,1215 127,1215 133,1202 139,1215 736,1215' },
      { color: YELLOW, points: '64,1215 70,926 76,1052 98,1053 104,1193 110,1215 707,1215 713,1202 719,1215 736,1215' },
    ],
  },
  levelSize: {
    title: 'LevelDB size',
    span: 'col-span-6',
    pad: 'pl-[44px] pr-[27px]',
    view: [845, 888, 1528, 1216],
    yLabels: ['360 GB', '350 GB', '340 GB', '330 GB', '320 GB'],
    step: 10,
    series: [
      { color: YELLOW, points: '845,916 858,916 880,921 1490,921 1500,918 1527,917' },
      { color: GREEN, points: '845,1036 912,1036 918,1034 1385,1034 1395,1031 1420,1036 1527,1035' },
      { color: TEAL, points: '845,1190 1527,1190' },
      { color: ORANGE, points: '845,1197 922,1197 925,1193 1527,1193' },
    ],
  },
  ancientReads: {
    title: 'Ancient reads',
    span: 'col-span-8',
    pad: 'pl-[57px] pr-[27px]',
    view: [81, 177, 1011, 505],
    yLabels: ['1 B/s', '500 mB/s', '0 B/s', '-500 mB/s', '-1 B/s'],
    filled: false,
    series: [
      { color: TEAL, points: '81,341 1009,341', width: 2 },
      { color: YELLOW, points: '81,341 997,341', width: 2 },
    ],
  },
  ancientWrites: {
    title: 'Ancient writes',
    span: 'col-span-8',
    pad: 'pl-[47px] pr-[27px]',
    view: [1112, 177, 2054, 505],
    yLabels: ['20 kB/s', '15 kB/s', '10 kB/s', '5 kB/s', '0 B/s'],
    series: [
      { color: DEEP_ORANGE, points: spikes(1112, 505, [291, 335, 295, 325, 258, 332, 243, 355, 332, 338, 355, 280, 322, 290, 340, 287, 332, 273, 355, 250, 345, 291, 315, 272, 262, 362, 291, 355, 258, 335, 295, 300, 345, 287, 345, 268, 345, 272, 315, 287, 385, 267, 352, 351, 302, 256, 355, 360, 291, 355, 287, 348, 290, 340, 252, 310, 335, 281, 331, 337]) },
      { color: TEAL, points: '1112,445 ' + spikes(1116, 505, [325, 298, 285, 312, 280, 325, 258, 347, 325, 362, 270, 340, 268, 385, 252, 345, 258, 350, 258, 350, 276, 338, 253, 352, 273, 392, 258, 270, 328, 285, 312, 345, 325, 303, 345, 256, 320, 297, 332, 281, 337, 312, 360, 285, 357, 267, 352, 352, 285, 342, 297, 365, 290, 290, 306, 291, 280, 290, 347]) + ' 2043,281 2052,281' },
      { color: YELLOW, points: '1112,504 2041,504' },
    ],
  },
  ancientSize: {
    title: 'Ancient size',
    span: 'col-span-8',
    pad: 'pl-[43px] pr-[27px]',
    view: [583, 177, 1529, 505],
    yLabels: ['477 GB', '476 GB', '475 GB', '474 GB', '473 GB'],
    series: [
      { color: GREEN, points: '583,244 1527,244' },
      { color: YELLOW, points: '583,257 1527,257' },
      { color: ORANGE, points: '583,484 1527,484' },
    ],
  },
};

function Panel({ title, span, children }: { title: string; span: string; children: React.ReactNode }) {
  return (
    <section
      className={clsx(
        'flex h-[175px] flex-col overflow-hidden rounded-xs bg-[#181b1f] ring-1 ring-[#25272c] ring-inset',
        span,
      )}
    >
      <h3 className="pt-[6px] text-center text-[11px] leading-4 font-medium text-[#d3d3e0]">{title}</h3>
      {children}
    </section>
  );
}

function Chart({
  title,
  span,
  pad,
  view,
  yLabels,
  series,
  step = 5,
  firstTick = 0,
  headroom = 0,
  filled = true,
  height = 'h-[109px]',
}: ChartProps) {
  const [left, top, right, bottom] = view;
  const ticks: number[] = [];
  for (let m = firstTick; m < 60; m += step) ticks.push(m);
  // the hour shown starts at 08:58:30
  const tickX = (m: number) => `${((m + 1.5) / 60) * 100}%`;
  const labelY = (i: number) => `${(headroom + ((1 - headroom) * i) / (yLabels.length - 1)) * 100}%`;

  return (
    <Panel title={title} span={span}>
      <div className={clsx(headroom ? 'pt-[17px]' : 'pt-[18px]', pad)}>
        <svg className={clsx('w-full overflow-visible', height)} role="img" aria-label={title}>
          <g stroke="#cccccc" strokeOpacity="0.17" shapeRendering="crispEdges">
            {yLabels.map((label, i) => (
              <line key={label} x1="0" x2="100%" y1={labelY(i)} y2={labelY(i)} />
            ))}
            {ticks.map((m) => (
              <line key={m} x1={tickX(m)} x2={tickX(m)} y1="0" y2="100%" />
            ))}
          </g>
          <svg
            width="100%"
            height="100%"
            viewBox={`${left} ${top} ${right - left} ${bottom - top}`}
            preserveAspectRatio="none"
            overflow="visible"
          >
            {series.map((s, i) => {
              const all = s.points.split(' ');
              const firstX = all[0].split(',')[0];
              const lastX = all[all.length - 1].split(',')[0];
              return (
                <g key={i}>
                  {filled && !s.lineOnly && (
                    <polygon
                      points={`${firstX},${bottom} ${s.points} ${lastX},${bottom}`}
                      fill={s.color}
                      fillOpacity="0.12"
                    />
                  )}
                  <polyline
                    points={s.points}
                    fill="none"
                    stroke={s.color}
                    strokeWidth={s.width ?? 1}
                    strokeOpacity="0.8"
                    strokeLinejoin="round"
                    vectorEffect="non-scaling-stroke"
                  />
                </g>
              );
            })}
          </svg>
          <g className="fill-[#d3d3e0] text-[10px] font-medium">
            {yLabels.map((label, i) => (
              <text key={label} x="-5" y={labelY(i)} dy="3" textAnchor="end">
                {label}
              </text>
            ))}
            {ticks.map((m) => (
              <text key={m} x={tickX(m)} y="100%" dy="14" textAnchor="middle">
                {`09:${String(m).padStart(2, '0')}`}
              </text>
            ))}
          </g>
        </svg>
      </div>
    </Panel>
  );
}

function NodeCount() {
  return (
    <Panel title="Node count" span="col-span-3">
      <div className="relative flex-1">
        <svg className="absolute inset-x-0 bottom-px h-[55px] w-full" viewBox="0 0 305 55" preserveAspectRatio="none">
          <path d="M2 55L4 1H31L32 55H34L35 1H303V55Z" fill="#73bf69" fillOpacity="0.25" />
          <path
            d="M2 55L4 1H31L32 55M34 55L35 1H303"
            fill="none"
            stroke="#73bf69"
            strokeOpacity="0.8"
            vectorEffect="non-scaling-stroke"
          />
        </svg>
        <p className="relative pt-[33px] text-center text-[78px] leading-[90px] font-bold text-[#73bf69]">4</p>
      </div>
    </Panel>
  );
}

function RowTitle({ children }: { children: string }) {
  return (
    <button className="col-span-24 flex h-6 items-center gap-[2px] pl-[7px] text-[13px] font-medium text-[#d3d3e0]">
      <ChevronDown size={9} strokeWidth={3} />
      {children}
    </button>
  );
}

function AppsIcon({ size }: { size: number }) {
  return (
    <svg width={size} height={size} viewBox="0 0 14 14" fill="none" stroke="currentColor" strokeWidth="1.4">
      <rect x="1" y="1" width="4.6" height="4.6" />
      <rect x="8.4" y="1" width="4.6" height="4.6" />
      <rect x="1" y="8.4" width="4.6" height="4.6" />
      <rect x="8.4" y="8.4" width="4.6" height="4.6" />
    </svg>
  );
}

function AddPanelIcon() {
  return (
    <svg width="20" height="13" viewBox="0 0 20 13" fill="none">
      <path d="M0 6h2.4v6H0zM3.7 3h2.4v9H3.7zM7.4 7h2.4v5H7.4zM11.1 1h2.2v11h-2.2z" fill="#9d9fa8" />
      <path d="M15.6 2.5v7M12.1 6h7" stroke="#f9a03c" strokeWidth="2.6" />
    </svg>
  );
}

function ClockIcon() {
  return (
    <svg width="14" height="14" viewBox="0 0 24 24" fill="none" stroke="currentColor" strokeWidth="2" strokeLinecap="round">
      <circle cx="12" cy="12" r="10" />
      <path d="M12 6.500v5.500H8" strokeLinejoin="round" />
    </svg>
  );
}

const toolButton = 'flex h-[25px] items-center justify-center border border-[#25272c] bg-[#181b1f]';

export default function App() {
  return (
    <div className="h-screen overflow-hidden border-b border-[#3a3b40] bg-[#111217] font-['Roboto',sans-serif] text-[#d3d3e0]">
      <header className="relative flex h-[34px] items-center justify-between pr-1 pl-2">
        <div className="flex items-center">
          <AppsIcon size={14} />
          <h1 className="ml-[7px] text-[14px] leading-5 font-medium whitespace-pre">
            <a href="#folder">Execution Clients </a> <a href="#dashboard">/ Geth: Multiple</a>
          </h1>
          <button aria-label="Mark as favorite" className="ml-[7px]">
            <Star size={14} />
          </button>
          <button aria-label="Share dashboard" className="ml-[13px]">
            <Share2 size={14} />
          </button>
        </div>
        <div className="flex items-center gap-[6px] text-[#9d9fa8]">
          <button aria-label="Add panel" className={clsx(toolButton, 'w-[35px]')}>
            <AddPanelIcon />
          </button>
          <button aria-label="Save dashboard" className={clsx(toolButton, 'w-[30px]')}>
            <Save size={13} />
          </button>
          <button aria-label="Dashboard settings" className={clsx(toolButton, 'w-[30px]')}>
            <Settings size={14} />
          </button>
          <div className="flex">
            <button className={clsx(toolButton, 'w-[114px] gap-[7px] text-xs font-medium')}>
              <ClockIcon />
              Last 1 hour
              <ChevronDown size={10} className="ml-[4px]" />
            </button>
            <button aria-label="Zoom out" className={clsx(toolButton, '-ml-px w-[29px]')}>
              <ZoomOut size={14} />
            </button>
          </div>
          <div className="flex">
            <button aria-label="Refresh" className={clsx(toolButton, 'w-[30px]')}>
              <RefreshCw size={14} />
            </button>
            <button className={clsx(toolButton, '-ml-px w-[47px] gap-[5px] text-xs font-medium')}>
              1m
              <ChevronDown size={10} />
            </button>
          </div>
          <button aria-label="Cycle view mode" className={clsx(toolButton, 'w-[29px]')}>
            <Monitor size={14} />
          </button>
        </div>
        <button
          aria-label="Open menu"
          className="absolute top-[30px] -left-3 size-[17px] rounded-full border border-[#2c2e33] bg-[#202226]"
        />
      </header>

      <nav className="mt-[6px] flex h-[25px] items-stretch justify-between pr-[7px] pl-2 text-[10px] font-medium">
        <div className="flex gap-[3px]">
          <span className="flex w-9 items-center justify-center border border-[#25272c] bg-[#181b1f] text-[#6e9fff]">filter</span>
          <button className="w-[69px] rounded-xs bg-[#22252b]">ingress_user</button>
          <button className="w-[19px] rounded-xs bg-[#22252b] text-[#ff780a]">=</button>
          <button className="w-[99px] rounded-xs bg-[#22252b]">bootnodes-mainnet</button>
          <button aria-label="Add filter" className="flex w-[25px] items-center justify-center rounded-xs bg-[#22252b]">
            <Plus size={12} />
          </button>
        </div>
        <div className="flex gap-4">
          <a href="#dual" className="flex w-[77px] items-center justify-center gap-1 border border-[#25272c] bg-[#181b1f]">
            <AppsIcon size={11} />
            Geth: Dual
          </a>
          <a href="#single" className="flex w-[84px] items-center justify-center gap-1 border border-[#25272c] bg-[#181b1f]">
            <AppsIcon size={11} />
            Geth: Single
          </a>
        </div>
      </nav>

      <main className="mt-[10px] grid grid-cols-24 gap-[7px] pr-1 pl-2">
        <RowTitle>System</RowTitle>
        <NodeCount />
        <Chart {...charts.cpu} />
        <Chart {...charts.ioWait} />
        <Chart {...charts.memory} />
        <Chart {...charts.diskReadOps} />
        <Chart {...charts.diskReads} />
        <Chart {...charts.diskWriteOps} />
        <Chart {...charts.diskWrites} />
        <Chart {...charts.ingress} />
        <Chart {...charts.egress} />

        <RowTitle>Network</RowTitle>
        <Chart {...charts.dials} />
        <Chart {...charts.serves} />
        <Chart {...charts.peers} />
        <Chart {...charts.lifetime} />

        <RowTitle>Database</RowTitle>
        <Chart {...charts.levelReads} />
        <Chart {...charts.levelWrites} />
        <Chart {...charts.levelCompactions} />
        <Chart {...charts.levelSize} />
        <Chart {...charts.ancientReads} />
        <Chart {...charts.ancientWrites} />
        <Chart {...charts.ancientSize} />
      </main>
    </div>
  );
}
